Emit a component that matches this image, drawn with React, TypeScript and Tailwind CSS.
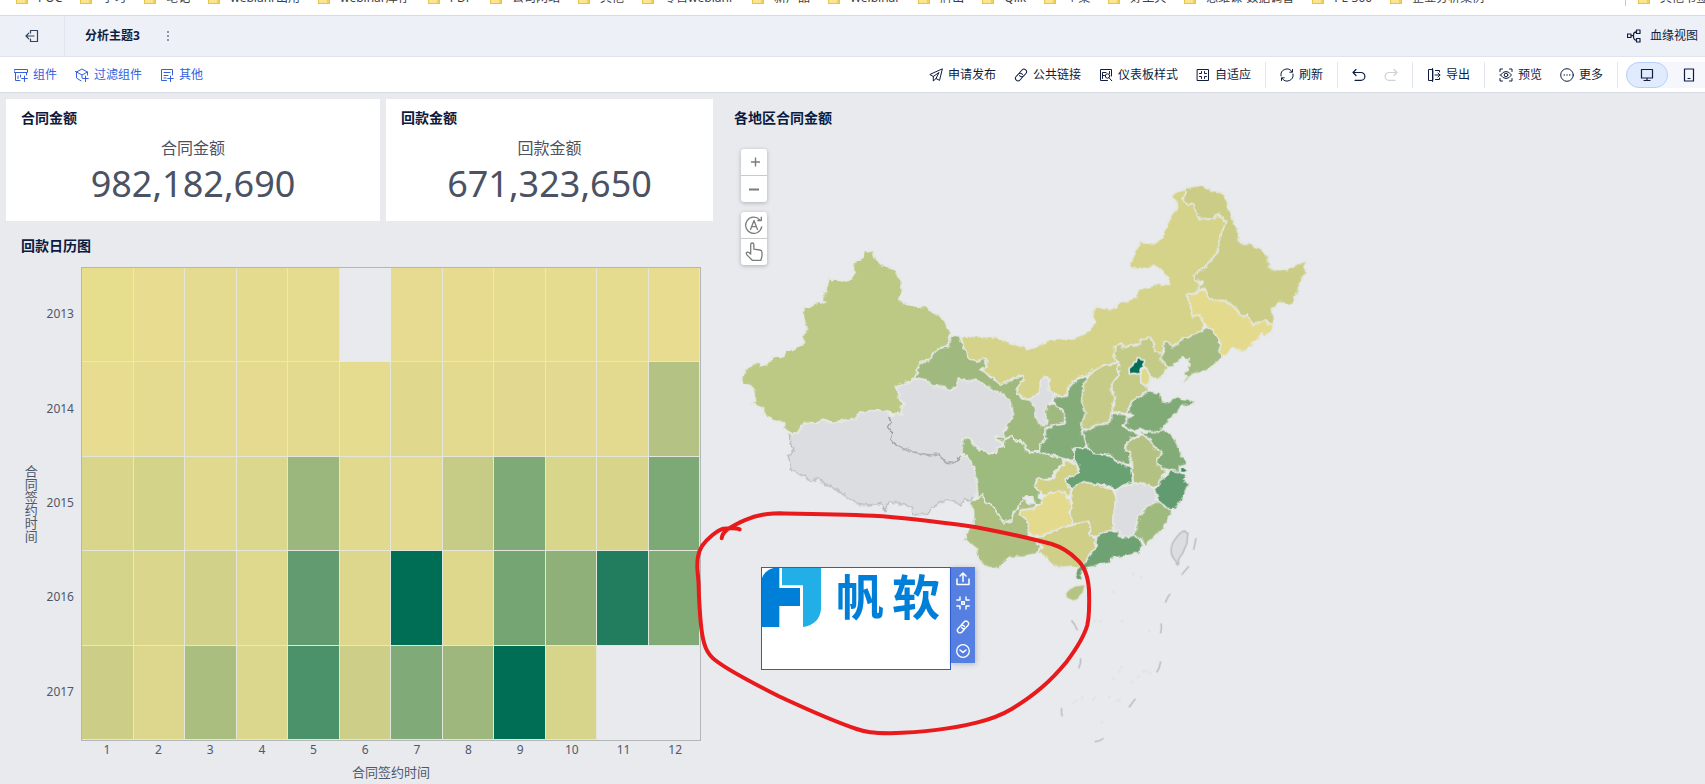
import type { ReactNode } from "react";

const bookmarks = [
  "POC", "学习", "笔记", "webianr出用", "webinar库存", "PDF", "公司网站", "其他", "零售webianr",
  "新产品", "Weibinar", "牌出", "Qlik", "个案", "好工具", "思维课-数据调普", "PL-300", "企业分析案例",
];

const months = ["1", "2", "3", "4", "5", "6", "7", "8", "9", "10", "11", "12"];

// one row per year, one colour per month, empty string = no data
const heatmap = [
  { year: "2013", cells: ["#e6dd8d", "#e8dc90", "#e4da90", "#e5db8f", "#e6dc8f", "", "#e7db91", "#e7db90", "#e6dc8f", "#e6dc90", "#e6dc8f", "#e8dc90"] },
  { year: "2014", cells: ["#e8dc90", "#e5db90", "#e4da90", "#e5da90", "#e3da8f", "#e5dc8f", "#e0d88d", "#e4da8f", "#e2d88f", "#e4d990", "#e3d98f", "#b4c383"] },
  { year: "2015", cells: ["#d9d68b", "#d3d389", "#e0d98e", "#dbd78d", "#9cb77e", "#e1d98e", "#e4da8f", "#c6cb86", "#7eaa77", "#d8d68b", "#d8d58b", "#7da977"] },
  { year: "2016", cells: ["#d4d48a", "#dad78c", "#d1d189", "#ded98d", "#629b70", "#dcd78d", "#006d55", "#ddd88c", "#76a574", "#90b07a", "#227d5f", "#80aa76"] },
  { year: "2017", cells: ["#ccce88", "#ddd78d", "#aabe80", "#dbd78c", "#4b9169", "#cdce88", "#80aa77", "#9db77d", "#006d55", "#d7d58b", "", ""] },
];

type Province = { name: string; fill: string; at: string; d: string };

// map sheets, each province is drawn in the coordinates of its sheet
const WEST = "translate(33 423)";
const NORTH = "translate(633 423)";
const EAST = "translate(933 243)";
const SOUTH = "translate(693 1023)";

const provinces: Province[] = [
  { name: "新疆", fill: "#bcc985", at: WEST, d: "M402 32 414 36 427 30 430 45 440 60 455 75 475 80 497 92 505 112 515 128 513 155 506 178 520 190 545 197 585 200 605 215 637 232 648 258 663 280 658 300 655 318 632 325 610 340 595 362 573 365 565 385 555 412 545 422 520 432 497 442 508 455 505 475 522 490 512 505 518 525 495 520 478 518 450 512 420 513 390 520 378 535 340 542 320 550 297 545 278 538 262 550 222 548 212 562 203 579 180 579 163 568 160 545 135 543 103 525 100 505 62 488 76 482 74 455 66 438 42 432 34 410 45 402 45 385 70 374 90 368 92 378 115 370 128 350 150 352 175 332 220 312 218 290 232 268 224 245 222 210 212 202 245 198 262 187 283 188 277 178 288 140 298 112 310 120 350 123 367 115 372 95 368 68 385 62 402 50Z" },
  { name: "西藏", fill: "#dcdde0", at: WEST, d: "M203 579 222 548 262 550 278 538 297 545 320 550 340 542 378 535 390 520 420 513 450 512 478 518 475 528 482 545 475 560 485 575 482 598 505 622 525 625 555 637 600 645 625 642 640 660 658 672 680 665 692 648 712 648 733 680 740 730 742 760 730 768 720 785 705 775 692 795 670 785 648 780 610 800 590 822 550 825 545 805 525 795 500 788 475 785 465 812 455 790 415 795 380 790 355 775 322 750 290 735 265 714 245 724 222 708 185 692 178 665 170 648 190 640 188 622 178 605 180 583Z" },
  { name: "甘肃", fill: "#9fb97e", at: WEST, d: "M663 287 688 287 697 310 702 325 715 352 738 362 765 354 770 368 765 385 752 390 780 408 790 418 812 432 820 418 845 420 858 410 878 408 880 420 862 440 862 462 882 476 960 490 975 495 1005 515 1005 548 985 552 965 562 950 562 945 580 948 600 930 612 930 632 905 638 888 632 880 608 858 605 845 588 830 595 822 610 805 600 792 588 825 592 822 575 835 550 850 522 840 485 820 465 795 452 770 440 745 422 730 420 712 425 685 417 680 440 662 450 640 442 610 440 595 425 560 415 555 412 573 365 595 362 610 340 632 325 655 318 658 300Z" },
  { name: "青海", fill: "#dcdde0", at: WEST, d: "M497 442 520 432 560 417 595 425 612 440 640 442 662 450 680 440 685 417 712 425 730 420 745 422 770 440 795 452 820 465 840 485 850 522 835 550 822 575 825 592 792 588 800 600 820 615 803 622 800 640 780 640 760 632 745 628 732 615 722 598 708 592 698 602 700 622 690 645 692 660 672 668 658 672 640 660 625 642 600 645 555 637 525 625 505 622 482 598 485 575 475 560 482 530 495 520 518 525 512 505 522 490 505 475 508 455Z" },
  { name: "四川", fill: "#9dba7f", at: WEST, d: "M698 602 708 592 722 598 732 615 745 628 760 632 780 640 800 640 803 622 822 618 822 610 830 598 845 588 858 605 880 608 888 632 905 638 930 635 962 645 997 657 1000 675 975 695 965 715 940 716 920 720 915 740 930 755 925 768 938 782 935 795 912 793 908 770 885 772 875 795 860 805 850 835 822 850 805 825 785 795 765 785 755 765 745 778 740 730 733 680 712 648 695 642Z" },
  { name: "内蒙古", fill: "#d4d389", at: NORTH, d: "M92 288 200 291 240 308 300 326 340 310 372 299 430 297 465 282 497 248 485 222 497 198 520 205 545 207 572 185 600 183 618 170 628 152 660 140 680 132 718 133 715 112 700 95 672 76 648 88 605 85 598 76 615 40 630 4 660 13 700 -5 703 -28 725 -75 740 -95 737 -122 723 -125 740 -148 765 -155 768 -140 758 -122 775 -105 792 -112 795 -90 805 -65 840 -63 868 -77 887 -52 870 -10 865 25 848 55 842 60 820 85 790 105 800 120 810 145 800 158 770 165 780 190 787 228 810 225 820 260 815 275 790 285 760 295 725 320 705 302 700 337 675 337 672 310 660 293 635 298 630 312 600 317 580 323 575 310 555 320 552 345 560 368 545 372 520 375 490 392 470 408 440 415 418 440 410 462 400 470 375 465 355 450 355 415 345 410 328 430 330 455 300 478 282 476 262 462 262 440 280 420 278 408 250 412 245 420 212 432 190 415 155 390 168 380 170 358 140 362 115 355 102 325Z" },
  { name: "黑龙江", fill: "#cbcd86", at: EAST, d: "M465 25 485 20 515 16 545 30 575 38 592 65 600 95 613 125 622 150 630 188 665 192 690 205 712 225 722 270 770 268 800 252 833 242 825 262 828 275 812 300 800 345 785 375 765 370 748 368 728 385 730 435 715 430 708 418 690 425 670 435 660 420 652 402 642 415 625 400 612 378 580 362 550 362 535 350 525 325 505 328 504 316 518 312 518 302 504 308 490 285 520 265 542 240 548 235 565 205 570 170 587 128 568 103 540 117 505 115 495 90 492 68 475 75 458 58 468 40Z" },
  { name: "吉林", fill: "#e4da8d", at: EAST, d: "M525 328 535 350 550 362 580 362 612 378 625 400 642 415 652 402 660 420 670 435 690 425 708 418 715 432 730 438 725 458 712 460 714 474 695 458 680 482 665 492 645 515 630 510 605 505 590 525 580 532 570 510 568 485 555 460 528 440 518 425 510 405 487 408 480 370 470 345 500 340 510 330Z" },
  { name: "辽宁", fill: "#a3bb80", at: EAST, d: "M528 440 555 460 568 485 570 510 580 532 545 560 530 572 500 578 480 590 465 607 455 605 472 590 462 582 480 555 475 538 455 534 440 548 425 560 412 562 392 535 402 515 402 482 415 485 425 500 460 475 490 465 515 455Z" },
  { name: "河北", fill: "#c3cb87", at: NORTH, d: "M555 320 572 310 580 323 600 317 630 312 635 298 660 293 672 310 675 337 700 337 692 355 712 382 700 405 680 420 662 410 658 432 650 440 658 452 640 462 605 485 598 505 590 522 565 518 545 515 550 490 555 475 545 450 545 430 567 405 562 390 565 370 552 345Z" },
  { name: "山西", fill: "#c6cb87", at: NORTH, d: "M565 370 562 390 567 405 545 430 545 450 555 475 550 490 545 515 545 540 525 553 500 555 455 575 455 550 465 520 455 485 460 440 472 408 490 392 520 377 545 372Z" },
  { name: "陕西", fill: "#83ac78", at: NORTH, d: "M472 408 460 440 455 485 465 520 455 550 455 575 465 605 472 622 430 625 440 640 430 658 402 657 365 645 328 637 330 612 348 600 345 572 355 562 385 552 405 548 405 515 375 495 370 468 400 470 412 462 418 440 440 418Z" },
  { name: "宁夏", fill: "#dcdde0", at: NORTH, d: "M345 410 357 418 352 435 355 452 372 460 368 480 350 492 345 520 352 540 345 557 330 555 315 530 318 508 310 492 298 478 325 460 330 430Z" },
  { name: "河南", fill: "#86ad79", at: NORTH, d: "M545 518 590 524 595 535 580 558 600 572 622 580 620 590 598 597 585 625 602 640 600 670 585 675 555 660 548 648 515 645 480 640 472 615 455 577 500 555 525 553 545 540Z" },
  { name: "山东", fill: "#80aa76", at: NORTH, d: "M598 505 605 485 640 462 658 452 690 460 695 485 715 487 740 467 760 478 790 482 788 493 750 500 740 515 715 545 700 562 685 577 650 575 630 565 615 575 600 570 580 558 595 535 610 525 592 520Z" },
  { name: "江苏", fill: "#82ab77", at: NORTH, d: "M695 565 725 585 740 610 755 645 770 665 765 675 748 680 750 695 735 695 710 688 685 675 678 655 697 640 690 630 668 622 665 602 645 590 630 580 625 572 650 578 680 577Z" },
  { name: "安徽", fill: "#b3c282", at: NORTH, d: "M630 580 645 590 665 602 668 622 690 632 695 645 678 655 685 675 708 690 700 705 690 730 672 740 640 730 610 728 605 700 602 640 585 625 598 597 620 595Z" },
  { name: "湖北", fill: "#6aa172", at: NORTH, d: "M432 625 472 622 490 640 548 650 555 662 602 680 608 728 580 735 560 750 545 745 540 738 510 735 470 728 430 742 425 748 405 730 405 712 430 708 445 695 447 680 432 668Z" },
  { name: "重庆", fill: "#d2d188", at: NORTH, d: "M402 657 430 670 447 680 443 695 430 708 405 712 408 730 422 748 420 768 408 768 400 755 380 757 360 765 338 766 330 755 315 740 322 715 345 718 370 715 378 695 402 675Z" },
  { name: "云南", fill: "#adc082", at: SOUTH, d: "M82 178 95 165 105 188 125 195 145 225 160 248 185 242 190 215 205 205 215 180 222 172 235 192 255 192 255 205 215 210 210 225 228 240 235 270 235 290 270 315 265 335 240 345 210 350 180 352 160 368 150 375 148 390 135 382 115 385 95 370 85 355 78 325 60 310 42 300 55 270 72 255 70 205 58 190 70 182Z" },
  { name: "贵州", fill: "#e4da8d", at: SOUTH, d: "M275 175 290 165 320 152 345 158 352 172 360 180 365 200 360 215 368 250 340 262 305 275 275 285 245 290 235 270 228 240 210 225 215 210 255 205 275 190Z" },
  { name: "广西", fill: "#cfcf88", at: SOUTH, d: "M270 315 250 300 275 287 305 275 340 262 390 250 415 243 422 265 420 285 438 295 435 325 420 345 405 370 385 385 355 380 325 382 300 370 290 350 265 335 275 320Z" },
  { name: "湖南", fill: "#cccd87", at: SOUTH, d: "M365 145 400 125 440 135 485 150 498 165 495 200 488 240 492 270 465 275 455 280 440 290 420 285 422 265 415 243 390 250 368 250 362 215 368 195 362 175Z" },
  { name: "江西", fill: "#dcdde0", at: SOUTH, d: "M498 150 530 135 565 130 598 135 612 150 618 165 618 185 590 200 572 220 560 250 550 288 525 292 505 285 492 268 488 240 495 200Z" },
  { name: "浙江", fill: "#629b70", at: SOUTH, d: "M612 150 635 115 650 105 660 92 690 95 712 105 700 116 714 130 705 160 690 190 672 207 650 205 640 195 625 185 620 165Z" },
  { name: "福建", fill: "#9fba7e", at: SOUTH, d: "M618 185 640 195 650 205 668 210 650 245 640 265 610 295 585 318 575 300 550 288 560 250 572 220 590 200Z" },
  { name: "广东", fill: "#6fa273", at: SOUTH, d: "M440 290 465 275 510 275 505 288 530 292 550 288 570 295 578 315 565 340 530 348 485 355 480 365 445 375 410 385 395 395 392 405 398 414 392 422 382 418 377 405 378 393 388 382 405 368 420 345 437 322Z" },
];

// too small for the rough coast line, drawn as they are
const smallProvinces: Province[] = [
  { name: "天津", fill: "#ded98d", at: NORTH, d: "M632 402 634 388 645 382 650 386 655 398 660 405 657 430 645 436 632 428Z" },
  { name: "北京", fill: "#006d55", at: NORTH, d: "M597 385 608 376 612 367 619 365 621 354 628 353 633 359 643 360 643 368 638 374 643 380 632 385 630 392 633 400 622 402 612 400 598 402Z" },
  { name: "上海", fill: "#3f8a68", at: SOUTH, d: "M691 83 700 81 714 92 704 98 691 97Z" },
  { name: "海南", fill: "#b4c482", at: SOUTH, d: "M347 458 355 449 375 437 392 435 407 433 403 445 400 458 390 468 385 478 370 483 352 476 347 468Z" },
];

const seaDots = [
  [549, 402], [573, 412], [489, 456], [434, 542], [452, 544], [516, 543], [598, 573], [514, 680], [508, 693],
  [490, 716], [565, 709], [580, 694], [590, 692], [600, 699], [546, 726], [370, 790], [378, 782], [396, 773],
  [430, 778], [436, 772], [478, 770], [502, 782], [508, 781], [456, 846],
];

function Icon({ children, size = 14 }: { children: ReactNode; size?: number }) {
  return (
    <svg
      width={size}
      height={size}
      viewBox="0 0 14 14"
      fill="none"
      stroke="currentColor"
      strokeLinecap="round"
      strokeLinejoin="round"
      className="shrink-0"
      aria-hidden="true"
    >
      {children}
    </svg>
  );
}

const linkIcon = (
  <g transform="rotate(-48 7 7)">
    <path d="M6.3 9.6H2.6a2.600 2.600 0 0 1 0-5.200h3.200a2.600 2.600 0 0 1 2.500 3.400" />
    <path d="M7.700 4.400h3.700a2.600 2.600 0 0 1 0 5.200H8.200a2.600 2.600 0 0 1-2.500-3.400" />
  </g>
);

function ToolButton({ icon, label }: { icon: ReactNode; label: string }) {
  return (
    <button type="button" className="flex shrink-0 items-center gap-[5px] whitespace-nowrap">
      <Icon>{icon}</Icon>
      {label}
    </button>
  );
}

function Divider() {
  return <span className="mx-[14px] h-[26px] w-px shrink-0 bg-[#e3e6ee]" />;
}

function Folder() {
  return <span className="h-[14px] w-3 shrink-0 border border-[#e6c34a] bg-[#fde590] shadow-[inset_-2px_0_0_#f0cf5c]" />;
}

function BookmarkBar() {
  return (
    <nav className="h-[15px] overflow-hidden bg-white text-xs leading-4 text-[#3c4043]">
      <div className="-mt-[10px] flex items-start pl-4">
        <ul className="flex gap-[18px]">
          {bookmarks.map((name) => (
            <li key={name}>
              <a href="#" className="flex gap-[10px] whitespace-nowrap">
                <Folder />
                {name}
              </a>
            </li>
          ))}
        </ul>
        <a href="#" className="ml-auto flex w-[80px] shrink-0 gap-[10px] overflow-hidden border-l border-[#c4c7cc] pl-3 whitespace-nowrap">
          <Folder />
          其他书签
        </a>
      </div>
    </nav>
  );
}

function Header() {
  return (
    <header className="flex h-[42px] items-center border-y border-t-[#d8dadf] border-b-[#e1e4ec] bg-[#edf0f6] text-xs text-[#0f1d40]">
      <button type="button" aria-label="退出" className="flex h-full w-[65px] items-center justify-center border-r border-[#e1e4ec] text-[#33435a]">
        <Icon>
          <path d="M5.500 4V1.500H12.500v11H5.500V10M9 7H1M3.800 4.200 1 7l2.800 2.800" strokeWidth="1.200" />
        </Icon>
      </button>
      <h1 className="ml-5 font-bold">分析主题3</h1>
      <button type="button" aria-label="更多操作" className="ml-[21px]">
        <Icon>
          <path d="M7 3h0M7 7h0M7 11h0" strokeWidth="1.600" />
        </Icon>
      </button>
      <button type="button" className="mr-[7px] ml-auto flex items-center gap-[9px]">
        <Icon>
          <path d="M.500 5h3.500v3.500H.500zM9.500 1H13v3.500H9.500zM9.500 9.500H13V13H9.500zM4 6.700H6.500M9.500 2.700Q6.500 3 6.500 6v1.500Q6.500 11 9.500 11.300" strokeWidth="1.200" />
        </Icon>
        血缘视图
      </button>
    </header>
  );
}

function Toolbar() {
  return (
    <div className="flex h-9 items-center justify-between overflow-hidden border-b border-[#d9dce5] bg-white text-xs text-[#0f1d40]">
      <div className="flex gap-[18px] pl-[14px] text-[#3460dc]">
        <ToolButton
          label="组件"
          icon={<path d="M.500 1.500h13v3H.500zM1.500 4.500V12.500H6M12.500 4.500V7M4 8v2.500M6.500 7v2M10.500 8v5.500M7.700 10.500h5.600" />}
        />
        <ToolButton
          label="过滤组件"
          icon={<path d="M6 12.800 1.500 10V4L7 1l5.500 3v3M1.500 4 7 7l5.500-3M7 7v3M.500 3.500l2 1M10.500 8v5.500M7.700 10.500h5.600" />}
        />
        <ToolButton
          label="其他"
          icon={<path d="M6.500 12.500H1.500V1.500h11V7M4 4.500h6M4 7.500h4M4 10h2M10.500 8v5.500M7.700 10.500h5.600" />}
        />
      </div>
      <div className="flex items-center">
        <div className="flex gap-[18px]">
          <ToolButton label="申请发布" icon={<path d="M13 1 .800 6.500l3.500 2V13l2.700-2.500 3.200 1.700zM4.300 8.500 10 4.500 7 10.500" />} />
          <ToolButton label="公共链接" icon={linkIcon} />
          <ToolButton
            label="仪表板样式"
            icon={
              <>
                <path d="M12.500 8V1.500h-11v11h7M3.500 10.500v-6H7M3.500 7.500h2M10.500 3.500v2" />
                <circle cx="8.500" cy="8" r="2.200" />
                <path d="m10 9.800 2.800 3" />
              </>
            }
          />
          <ToolButton label="自适应" icon={<path d="M1.500 1.500h11v11h-11zM5.500 3.500v2h-2M8.500 3.500v2h2M5.500 10.500v-2h-2M8.500 10.500v-2h2" />} />
        </div>
        <Divider />
        <ToolButton label="刷新" icon={<path d="M1 8a6 6 0 0 1 11-4.200M12.500 1.500v2.700H9.800M13 6a6 6 0 0 1-11 4.200M1.500 12.500V9.800h2.700" />} />
        <Divider />
        <button type="button" aria-label="撤销">
          <Icon>
            <path d="M4 1.500 1 4.500l3 3M1 4.500h8a3.900 3.900 0 0 1 0 7.800H3" strokeWidth="1.200" />
          </Icon>
        </button>
        <button type="button" aria-label="重做" disabled className="ml-[18px] text-[#cdd1da]">
          <Icon>
            <path d="m10 1.500 3 3-3 3M13 4.500H5a3.900 3.900 0 0 0 0 7.800h6" strokeWidth="1.200" />
          </Icon>
        </button>
        <Divider />
        <ToolButton label="导出" icon={<path d="M5.500 1.500h-4v11h4zM5.500 .500v13M8.500 2.500h4V4M12.500 10v1.500h-4M8 7H13M11 5l2 2-2 2" />} />
        <Divider />
        <div className="flex gap-[18px]">
          <ToolButton
            label="预览"
            icon={
              <>
                <path d="M1 3.500V1h2.500M10.500 1H13v2.500M13 10.500V13h-2.500M3.500 13H1v-2.500M1.500 7Q4 3.500 7 3.500T12.500 7Q10 10.500 7 10.500T1.500 7Z" />
                <circle cx="7" cy="7" r="1.800" />
              </>
            }
          />
          <ToolButton
            label="更多"
            icon={
              <>
                <circle cx="7" cy="7" r="6.300" />
                <path d="M4.200 7h0M7 7h0M9.800 7h0" strokeWidth="1.400" />
              </>
            }
          />
        </div>
        <span className="mr-2 ml-[14px] h-[26px] w-px bg-[#e3e6ee]" />
        <div className="flex rounded-l-full bg-[#f6f7fc]">
          <button type="button" aria-label="桌面端" className="flex h-[26px] w-[42px] items-center justify-center rounded-full border border-[#b5d0fb] bg-[#e0ebfe]">
            <Icon>
              <path d="M1.500 1.500h11v8.500h-11zM7 10v2.500M4 12.500h6" strokeWidth="1.200" />
            </Icon>
          </button>
          <button type="button" aria-label="移动端" className="flex h-[26px] w-[37px] items-center justify-center pl-1">
            <Icon>
              <path d="M2.500 1h9v12h-9zM6 10.500h2" strokeWidth="1.200" />
            </Icon>
          </button>
        </div>
      </div>
    </div>
  );
}

function PanelTitle({ children }: { children: ReactNode }) {
  return <h2 className="px-[15px] pt-[9px] text-sm leading-5 font-bold text-[#0a1a40]">{children}</h2>;
}

function KpiCard({ title, value }: { title: string; value: string }) {
  return (
    <section className="bg-white pb-[17px]">
      <PanelTitle>{title}</PanelTitle>
      <div className="mt-2 text-center text-[#4a5263]">
        <p className="text-base leading-6">{title}</p>
        <p className="mt-1 text-[36px] leading-10">{value}</p>
      </div>
    </section>
  );
}

function CalendarHeatmap() {
  return (
    <section className="col-span-2">
      <PanelTitle>回款日历图</PanelTitle>
      <div className="mt-[11px] flex h-[474px] pr-3 pl-4 text-xs text-[#4f586a]">
        <div className="flex w-4 items-center justify-center text-[13px] [writing-mode:vertical-rl]">
          <span className="[text-orientation:upright]">合同签约时间</span>
        </div>
        <div className="grid w-9 grid-rows-5 pb-[2px] text-right">
          {heatmap.map((row) => (
            <span key={row.year} className="self-center">{row.year}</span>
          ))}
        </div>
        <div className="ml-[7px] grid flex-1 grid-rows-5 border border-[#b3b7b8]">
          {heatmap.map((row) => (
            <div key={row.year} className="grid grid-cols-12">
              {row.cells.map((color, i) => (
                <div
                  key={i}
                  className={color ? "border-r border-b border-[#e4e6dc]" : ""}
                  style={{ backgroundColor: color || undefined }}
                />
              ))}
            </div>
          ))}
        </div>
      </div>
      <div className="pr-3 pl-[75px] text-center text-[#4f586a]">
        <div className="grid grid-cols-12 text-xs leading-[18px]">
          {months.map((m) => (
            <span key={m}>{m}</span>
          ))}
        </div>
        <p className="mt-[3px] text-[13px] leading-5">合同签约时间</p>
      </div>
    </section>
  );
}

function ChinaMap() {
  return (
    <svg viewBox="0 0 2940 2050" className="w-full [grid-area:1/1]" role="img" aria-label="各地区合同金额">
      <defs>
        <filter id="coast" x="0" y="0" width="2940" height="2050" filterUnits="userSpaceOnUse" colorInterpolationFilters="sRGB">
          <feTurbulence type="fractalNoise" baseFrequency="0.06" numOctaves="2" seed="4" />
          <feDisplacementMap in="SourceGraphic" scale="15" xChannelSelector="R" yChannelSelector="G" />
        </filter>
      </defs>
      <g filter="url(#coast)" stroke="#e6e8e4" strokeWidth="5" strokeLinejoin="round">
        {provinces.map((p) => (
          <path key={p.name} d={p.d} fill={p.fill} transform={p.at} />
        ))}
        <g transform={WEST} fill="none" strokeWidth="4">
          <path
            stroke="#97999c"
            d="M475 528 482 545 475 560 485 575 482 598 505 622 525 625 555 637 600 645 625 642 640 660 658 672 680 665 692 648"
          />
          <path
            stroke="#b6b8bb"
            d="M730 768 720 785 705 775 692 795 670 785 648 780 610 800 590 822 550 825 545 805 525 795 500 788 475 785 465 812 455 790 415 795 380 790 355 775 322 750 290 735 265 714 245 724 222 708 185 692 178 665 170 648 190 640 188 622 178 605 180 583"
          />
        </g>
      </g>
      <g stroke="#e6e8e4" strokeWidth="5" strokeLinejoin="round">
        {smallProvinces.map((p) => (
          <path key={p.name} d={p.d} fill={p.fill} transform={p.at} />
        ))}
        <path
          transform={SOUTH}
          fill="#dcdde0"
          stroke="#b6b8bb"
          strokeWidth="4"
          d="M690 280 698 274 706 273 708 278 714 280 712 292 711 310 704 325 697 342 690 350 685 362 686 372 681 375 678 364 670 354 664 342 663 326 668 308 678 294Z"
        />
      </g>
      <g transform={SOUTH} fill="none" stroke="#b4b6b9" strokeWidth="4">
        <path d="M738 294 731 329M716 379 695 404M661 462 654 470 646 488M633 550 634 562 632 580M632 664 627 684 620 697M556 776 537 802M461 895 448 902 434 905M335 804 334 816 337 829M392 655 391 670 386 685M364 541 374 554 382 571" />
        {seaDots.map(([x, y]) => (
          <circle key={`${x}-${y}`} cx={x} cy={y} r="2.500" stroke="#dadcd8" strokeWidth="2" />
        ))}
      </g>
    </svg>
  );
}

function MapControls() {
  return (
    <div className="absolute top-[50px] left-[22px] flex flex-col gap-[10px] text-[#7b7b7d]">
      <div className="flex w-[26px] flex-col divide-y divide-[#c9cacd] rounded-[3px] bg-white shadow-[0_1px_4px_rgba(0,0,0,0.25)]">
        <button type="button" aria-label="放大" className="flex h-[27px] items-center justify-center pl-[2px]">
          <Icon>
            <path d="M7.500 2.500v9M3 7h9" strokeWidth="1.400" strokeLinecap="butt" />
          </Icon>
        </button>
        <button type="button" aria-label="缩小" className="flex h-[26px] items-center justify-center">
          <Icon>
            <path d="M2 7.500h10" strokeWidth="2" strokeLinecap="butt" />
          </Icon>
        </button>
      </div>
      <div className="flex w-[26px] flex-col divide-y divide-[#c9cacd] rounded-[3px] bg-white shadow-[0_1px_4px_rgba(0,0,0,0.25)]">
        <button type="button" aria-label="自动" className="flex h-[27px] items-center justify-center">
          <Icon size={18}>
            <path d="M13 8.500A6.300 6.300 0 1 1 11.500 3M12.700.800v2.700H10M4.300 10.500 7 3.500l2.700 7M5.200 8.300h3.600" />
          </Icon>
        </button>
        <button type="button" aria-label="拖拽" className="flex h-[26px] items-center justify-center">
          <Icon size={20}>
            <path d="M4.700 8.500V1.800a1.100 1.100 0 0 1 2.200 0V5l4.200.600q1.500.300 1.500 1.700v2.500l-.800 3H5.800L2 9q-1-1.700.400-1.900Q3.500 7 4.700 8.500Z" strokeWidth=".9" />
          </Icon>
        </button>
      </div>
    </div>
  );
}

function LogoWidget() {
  return (
    <div className="absolute top-[468px] left-[42px] flex items-start">
      <div className="flex h-[103px] w-[190px] items-start border border-[#2a5cd7] bg-white">
        <svg width="59" height="59" viewBox="0 0 177 177" aria-hidden="true" className="shrink-0">
          <path d="M0 30Q8 8 34 0H52V60H114V114H52V177H0Z" fill="#007fd8" />
          <path d="M60 0H177V124Q172 170 123 177V52H60Z" fill="#22aee7" />
        </svg>
        <div className="flex gap-2 pl-[15px] text-[48px] leading-[58px] font-bold text-[#007fd8]">
          <span>帆</span>
          <span>软</span>
        </div>
      </div>
      <div className="flex w-6 flex-col bg-[#5580e2] text-white shadow-[1px_1px_5px_rgba(60,70,100,0.3)]">
        <button type="button" aria-label="上传" className="flex h-6 items-center justify-center">
          <Icon>
            <path d="M1 7v5.500h12V7M7 9.500V1.500M4 4l3-3 3 3" strokeWidth="1.500" />
          </Icon>
        </button>
        <button type="button" aria-label="自适应尺寸" className="flex h-6 items-center justify-center">
          <Icon>
            <path d="M5.700 5.700h2.600v2.600H5.700zM.800 4H4V1M13.200 4H10V1M.800 10H4v3M13.200 10H10v3" strokeWidth="1.400" />
          </Icon>
        </button>
        <button type="button" aria-label="链接" className="flex h-6 items-center justify-center">
          <Icon>
            <g strokeWidth="1.400">{linkIcon}</g>
          </Icon>
        </button>
        <button type="button" aria-label="展开" className="flex h-6 items-center justify-center">
          <Icon>
            <circle cx="7" cy="7" r="6.300" strokeWidth="1.300" />
            <path d="m4 6 3 2.500L10 6" strokeWidth="1.600" />
          </Icon>
        </button>
      </div>
    </div>
  );
}

// hand-drawn circle around the logo
function Marker() {
  return (
    <svg width="420" height="240" viewBox="0 0 1260 720" className="pointer-events-none absolute top-[401px] -left-[29px]" aria-hidden="true">
      <path
        fill="none"
        stroke="#e81a1c"
        strokeWidth="12"
        strokeLinecap="round"
        strokeLinejoin="round"
        d="M149 88C140 84 115 85 100 86C80 92 50 118 36 138C22 162 22 180 22 205C27 250 27 270 27 290C29 330 30 350 34 385C40 435 50 460 75 480C110 508 180 545 265 588C340 623 440 667 500 687C530 697 545 699 600 700C700 697 780 688 860 668C900 658 935 645 965 627C1035 585 1080 545 1130 485C1160 445 1185 400 1192 375C1199 345 1198 300 1197 270C1194 225 1180 195 1160 178C1135 152 1110 140 1085 132C1020 114 930 95 850 80C750 66 640 52 550 47C450 42 350 41 270 40C215 42 190 48 150 67C120 82 98 92 95 115"
      />
    </svg>
  );
}

export default function App() {
  return (
    <div className="min-h-screen bg-[#e8eaee] font-['Noto_Sans','Noto_Sans_CJK_SC',sans-serif]">
      <BookmarkBar />
      <Header />
      <Toolbar />
      <main className="grid grid-cols-[374fr_327fr_980fr] grid-rows-[auto_1fr] gap-[6px] overflow-hidden px-[6px] pt-[6px]">
        <KpiCard title="合同金额" value="982,182,690" />
        <KpiCard title="回款金额" value="671,323,650" />
        <section className="relative row-span-2 grid content-start">
          <div className="[grid-area:1/1]">
            <PanelTitle>各地区合同金额</PanelTitle>
          </div>
          <ChinaMap />
          <MapControls />
          <LogoWidget />
          <Marker />
        </section>
        <CalendarHeatmap />
      </main>
    </div>
  );
}
